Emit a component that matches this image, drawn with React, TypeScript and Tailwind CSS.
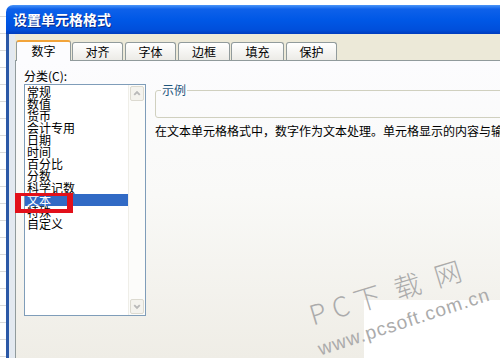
import React from "react";

const categories = [
  "常规",
  "数值",
  "货币",
  "会计专用",
  "日期",
  "时间",
  "百分比",
  "分数",
  "科学记数",
  "文本",
  "特殊",
  "自定义",
];

function Chevron({ down = false }: { down?: boolean }) {
  return (
    <svg width="13" height="13" viewBox="0 0 13 13">
      <polyline
        points={down ? "3.5,5 6.5,8 9.5,5" : "3.5,8 6.5,5 9.5,8"}
        fill="none"
        stroke="#b9b9b9"
        strokeWidth="2"
      />
    </svg>
  );
}

function Tab({ label, active = false, className = "" }: { label: string; active?: boolean; className?: string }) {
  if (active) {
    return (
      <div
        className={`relative z-10 -mb-[1px] flex h-[21px] shrink-0 items-start justify-center rounded-t-[3px] border-x border-t-[2px] border-x-[#919b9c] border-t-[#f2a43a] bg-[#fcfcfe] pt-[2px] text-[12px] leading-[14px] ${className}`}
      >
        {label}
      </div>
    );
  }
  return (
    <div
      className={`flex h-[18px] shrink-0 items-center justify-center rounded-t-[3px] border-x border-t border-[#919b9c] bg-[linear-gradient(to_bottom,#ffffff,#ecebe6)] text-[12px] leading-[14px] ${className}`}
    >
      {label}
    </div>
  );
}

export default function App() {
  return (
    <div className="relative h-[358px] w-[500px] overflow-hidden bg-white font-['Noto_Sans_CJK_SC','Noto_Sans',sans-serif] text-black">
      <div className="h-full bg-[repeating-linear-gradient(to_bottom,transparent_0px,transparent_16px,#dadada_16px,#dadada_17px)] pl-[6px] pt-[5px]">
        <div className="flex h-full flex-col overflow-hidden rounded-tl-[7px]">
          {/* title bar */}
          <div className="flex h-[29px] shrink-0 items-center bg-[linear-gradient(to_bottom,#4a95f8_0%,#0e61ea_14%,#0058e6_50%,#004fdb_85%,#003cbd_100%)] pl-[7px] text-[14px] font-bold text-white [text-shadow:1px_1px_#0a2a8c]">
            设置单元格格式
          </div>

          {/* body */}
          <div className="flex min-w-0 flex-1 border-l-[3px] border-[#2b58a6]">
            <div className="w-[6px] shrink-0 bg-[#e3e9f0]" />
            <div className="flex min-w-0 flex-1 flex-col bg-[#ece9d8] pt-[6px]">
              {/* tabs */}
              <div className="flex h-[20px] items-end pl-[1px]">
                <Tab label="数字" active className="w-[55px]" />
                <Tab label="对齐" className="ml-[1px] w-[51px]" />
                <Tab label="字体" className="ml-[2px] w-[51px]" />
                <Tab label="边框" className="ml-[2px] w-[52px]" />
                <Tab label="填充" className="ml-[1px] w-[53px]" />
                <Tab label="保护" className="ml-[2px] w-[51px]" />
              </div>

              {/* panel */}
              <div className="flex min-w-0 flex-1 border-l border-t border-[#919b9c] bg-[linear-gradient(to_bottom,#fcfcfe_0%,#f9f9f7_45%,#efede6_100%)] pl-[8px] pt-[7px]">
                <div className="flex w-[122px] shrink-0 flex-col">
                  <div className="h-[16px] text-[12px] leading-[16px]">分类(C):</div>
                  <div className="flex h-[232px] border border-[#7f9db9] bg-white">
                    <div className="flex-1 pt-[1px]">
                      {categories.map((c) => (
                        <div
                          key={c}
                          className={`h-[12px] pl-[2px] text-[12px] leading-[12px] ${
                            c === "文本" ? "bg-[#316ac5] text-white" : ""
                          }`}
                        >
                          {c}
                        </div>
                      ))}
                    </div>
                    <div className="flex w-[17px] shrink-0 flex-col justify-between border-l border-[#efeee8] bg-[#fcfcfa] p-[1px]">
                      <div className="flex h-[15px] w-[14px] items-center justify-center rounded-[2px] border border-[#dcdad0] bg-[#f4f3ee]">
                        <Chevron />
                      </div>
                      <div className="flex h-[15px] w-[14px] items-center justify-center rounded-[2px] border border-[#dcdad0] bg-[#f4f3ee]">
                        <Chevron down />
                      </div>
                    </div>
                  </div>
                </div>

                <div className="ml-[9px] flex min-w-0 flex-1 flex-col pt-[22px]">
                  <div className="relative h-[28px] w-[400px] shrink-0 rounded-[3px] border border-[#d0d0bf]">
                    <span className="absolute left-[5px] top-[-8px] bg-[#fcfcfd] px-[1px] text-[12px] leading-[14px] text-[#1f567c]">
                      示例
                    </span>
                  </div>
                  <div className="mt-[6px] whitespace-nowrap text-[12px] leading-[14px]">
                    在文本单元格格式中，数字作为文本处理。单元格显示的内容与输入的内容完全一致。
                  </div>
                </div>
              </div>
            </div>
          </div>
        </div>
      </div>

      {/* red highlight box */}
      <div className="absolute left-[15px] top-[193px] h-[20px] w-[58px] border-x-[6px] border-b-[4px] border-t-[3px] border-[#e2101a]" />

      {/* watermark */}
      <div className="absolute left-[364px] top-[300px] h-[58px] w-[136px] bg-white" />
      <div className="absolute left-[305px] top-[275px] flex h-[34px] w-[160px] rotate-[-17deg] items-center justify-center whitespace-nowrap text-[27px] font-light leading-[34px] text-[#ababab]">
        <span>P</span>
        <span className="ml-[7px]">C</span>
        <span className="ml-[6px]">下</span>
        <span className="ml-[15px]">载</span>
        <span className="ml-[15px]">网</span>
      </div>
      <div className="absolute left-[309px] top-[310px] flex h-[24px] w-[190px] rotate-[-18deg] items-center justify-center whitespace-nowrap font-['Liberation_Sans',sans-serif] text-[19px] leading-[24px] tracking-[1px] text-[#ababab]">
        www.pcsoft.com.cn
      </div>
    </div>
  );
}
